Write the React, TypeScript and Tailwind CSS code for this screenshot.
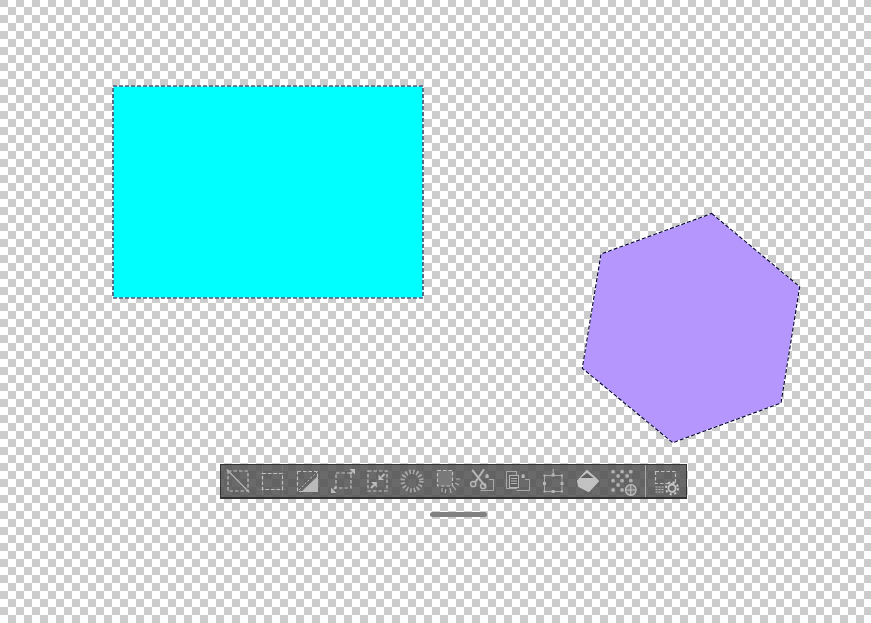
import React from "react";

const dash = "#cfcfcf";
const light = "#cccccc";

function Tool({ children }: { children: React.ReactNode }) {
  return (
    <div className="flex h-full w-[32px] shrink-0 items-center justify-center">
      <svg className="opacity-85" width="30" height="30" viewBox="0 0 30 30" fill="none">
        {children}
      </svg>
    </div>
  );
}

const Box = ({ x, y, w, h, fill = "none" }: { x: number; y: number; w: number; h: number; fill?: string }) => (
  <rect x={x} y={y} width={w} height={h} fill={fill} stroke={dash} strokeWidth="1.2" strokeDasharray="3.5 2" />
);

function Toolbar() {
  return (
    <div className="flex h-[35px] w-[467px] items-center gap-[3.2px] border border-b-2 border-[#333333] bg-[#505050]/85">
      <Tool>
        <Box x={6} y={5} w={20} h={20} />
        <path d="M4.7 3.3L27.3 26.3" stroke={light} strokeWidth="1.2" />
      </Tool>
      <Tool>
        <path d="M1.5 7.5H29M1.5 23.5H29M5.5 0V30M25.5 0V30" stroke="#8f8f8f" strokeWidth="0.8" strokeDasharray="1 1" />
        <Box x={5.5} y={7.5} w={20} h={16} />
      </Tool>
      <Tool>
        <Box x={5.5} y={5.5} w={20} h={20} />
        <path d="M25.5 5.5L5.5 25.5" stroke={dash} strokeDasharray="2 2" />
        <path d="M26 10V26H9Z" fill="#c8c8c8" />
      </Tool>
      <Tool>
        <Box x={8} y={7} w={15} h={15} />
        <path d="M22 8L24 6M8 21L6 23" stroke={light} strokeWidth="2" />
        <path d="M27 3V8.5L21.5 3ZM3 27V21.5L8.5 27Z" fill={light} />
      </Tool>
      <Tool>
        <Box x={5} y={5} w={19} h={20} />
        <path d="M21.5 8L18.5 11M8 22L11 19" stroke={light} strokeWidth="2" />
        <path d="M15.5 8.5V14H21ZM13.8 21.7V16H8.1Z" fill={light} />
      </Tool>
      <Tool>
        <circle cx="14" cy="15" r="9.3" stroke="#b4b4b4" strokeWidth="4.6" strokeDasharray="1.7 2" />
      </Tool>
      <Tool>
        <Box x={4.5} y={4.5} w={15} h={15.5} fill="#7d7d7d" />
        <path d="M23 13H27M22 17L26 19M20 20L23 24M17 22L18 27M13 23L12 27M9 22V26" stroke="#bcbcbc" strokeWidth="1.2" />
      </Tool>
      <Tool>
        <path d="M4.2 4L17.6 20.7M16 3.3L7.6 15.7" stroke="#c4c4c4" strokeWidth="2" />
        <circle cx="5.2" cy="18" r="2.6" stroke="#c4c4c4" strokeWidth="1.5" />
        <circle cx="15.2" cy="20" r="2.6" stroke="#c4c4c4" strokeWidth="1.5" />
        <path d="M21 13.5H25.5V24.5H12.5" stroke="#b4b4b4" strokeWidth="1" />
        <path d="M17.5 12V9.5a1.6 1.6 0 0 1 3.2 0V12Z" fill="#c4c4c4" />
      </Tool>
      <Tool>
        <rect x="2.5" y="5.5" width="10" height="17" stroke="#b4b4b4" />
        <rect x="5.5" y="9.5" width="9" height="12" fill="#5e5e5e" stroke="#c4c4c4" />
        <path d="M7 12.5H13M7 15H13M7 17.5H13" stroke="#c4c4c4" />
        <path d="M21 13.5H25.5V24.5H12.5" stroke="#b4b4b4" />
        <path d="M17.5 12V9.5a1.6 1.6 0 0 1 3.2 0V12Z" fill="#c4c4c4" />
      </Tool>
      <Tool>
        <rect x="5.5" y="9.5" width="17.5" height="16" stroke="#b4b4b4" />
        <path d="M14.2 3V9" stroke="#c4c4c4" />
        <path d="M12.7 7.5H15.7V10.5H12.7ZM12.7 24H15.7V27H12.7ZM4 16H7V19H4ZM21.5 16H24.5V19H21.5ZM4.5 8.5H6.5V10.5H4.5ZM22 8.5H24V10.5H22ZM4.5 24.5H6.5V26.5H4.5ZM22 24.5H24V26.5H22Z" fill="#c4c4c4" />
      </Tool>
      <Tool>
        <path d="M13 5L24 15L14.7 25L5 20L4 15Z" fill="#d2d2d2" stroke="#d2d2d2" strokeWidth="2" strokeLinejoin="round" />
        <path d="M13 7L19.5 12H6.5Z" fill="#5e5e5e" />
      </Tool>
      <Tool>
        <g fill="#bcbcbc">
          <circle cx="4.1" cy="5.7" r="1.9" />
          <circle cx="13.1" cy="5.7" r="1.9" />
          <circle cx="21.8" cy="5.7" r="1.9" />
          <circle cx="9.1" cy="10" r="1.9" />
          <circle cx="18.1" cy="10" r="1.9" />
          <circle cx="4.1" cy="14.7" r="1.9" />
          <circle cx="13.1" cy="14.7" r="1.9" />
          <circle cx="21.8" cy="14.7" r="1.9" />
          <circle cx="9.1" cy="19" r="1.9" />
          <circle cx="4.1" cy="24" r="1.9" />
          <circle cx="13.1" cy="24" r="1.9" />
        </g>
        <circle cx="21.8" cy="24" r="5.3" fill="#7d7d7d" stroke="#d4d4d4" strokeWidth="1.2" />
        <path d="M21.8 19V29M16.8 24H26.8" stroke="#d4d4d4" />
      </Tool>
      <div className="ml-[2px] h-full w-[1px] shrink-0 bg-[#a8a8a8]" />
      <Tool>
        <Box x={5.5} y={5.5} w={20} h={12} />
        <path d="M5.5 21H13.5M5.5 23.5H13.5M5.5 26H13.5" stroke={light} strokeDasharray="2 1" />
        <circle cx="22" cy="22.3" r="3.6" stroke="#dadada" strokeWidth="1.8" />
        <circle cx="22" cy="22.3" r="6" stroke="#dadada" strokeWidth="2" strokeDasharray="2.2 2.5" />
      </Tool>
    </div>
  );
}

export default function App() {
  return (
    <div className="relative h-[623px] w-[871px] overflow-hidden bg-[conic-gradient(#ffffff_25%,#cccccc_0_50%,#ffffff_0_75%,#cccccc_0)] bg-[length:16px_16px] bg-[position:0_-1px]">
      {/* selected shapes sit freely on the canvas */}
      <svg className="absolute inset-0" width="871" height="623" viewBox="0 0 871 623">
        <rect x="113" y="86" width="310" height="212" fill="#00ffff" />
        <rect x="113" y="86" width="310" height="212" fill="none" stroke="#ffffff" strokeWidth="1" />
        <rect x="113" y="86" width="310" height="212" fill="none" stroke="#000033" strokeWidth="1.1" strokeDasharray="4 2" />
        <polygon points="711.7,213.5 799.7,286.7 781,403 672.7,442.7 582.3,368.3 601,254" fill="#b596fd" />
        <polygon points="711.7,213.5 799.7,286.7 781,403 672.7,442.7 582.3,368.3 601,254" fill="none" stroke="#ffffff" strokeWidth="1" />
        <polygon points="711.7,213.5 799.7,286.7 781,403 672.7,442.7 582.3,368.3 601,254" fill="none" stroke="#000033" strokeWidth="1.1" strokeDasharray="4 2" />
      </svg>
      <div className="absolute left-[220px] top-[464px] flex flex-col items-start">
        <Toolbar />
        <div className="ml-[210px] mt-[13px] h-[5px] w-[57px] rounded-full bg-[#808080]" />
      </div>
    </div>
  );
}
